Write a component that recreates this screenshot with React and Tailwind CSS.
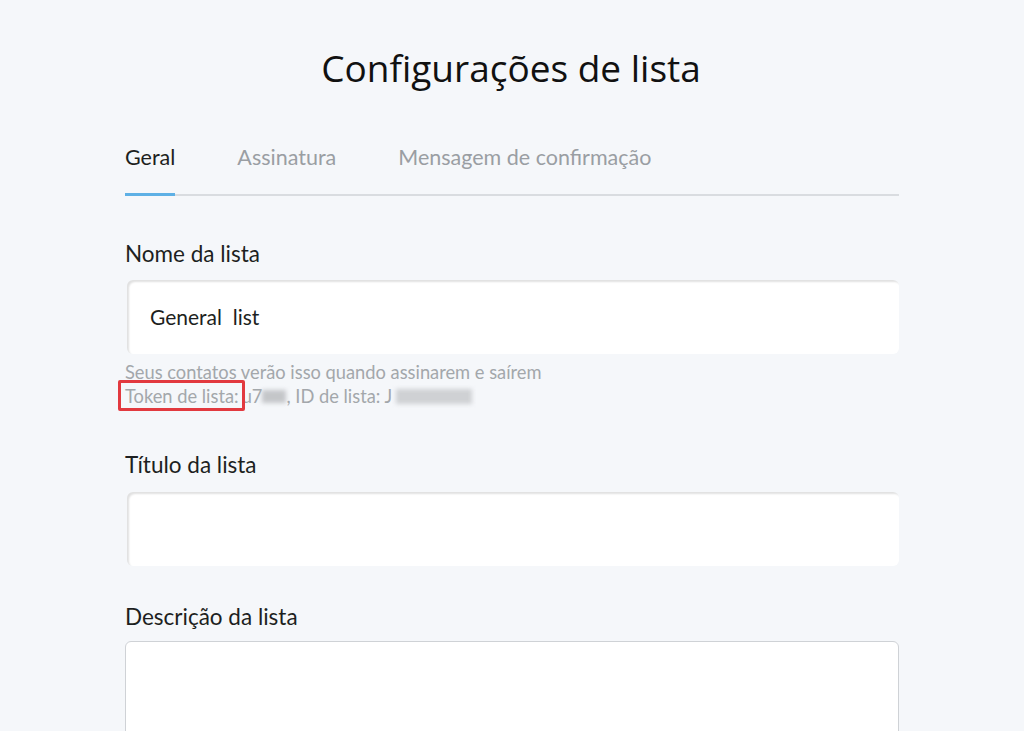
import React from 'react';

const Field = ({ label, value, children }) => (
    <div className="flex flex-col">
        <label className="text-[22.5px] text-[#1d1f21] leading-none">{label}</label>
        <div className="mt-[15px] ml-[2px] h-[74px] bg-white rounded-[6px] shadow-[inset_2px_2px_2px_rgba(0,0,0,0.12)] flex items-center px-[23px] text-[21px] text-[#1d1f21] whitespace-pre">
            {value}
        </div>
        {children}
    </div>
);

const App = () => {
    return (
        <div className="min-h-[731px] h-[731px] overflow-hidden bg-[#f5f7fa] font-['Lato',sans-serif]">
            <div className="w-[774px] ml-[125px] pt-[46px]">
                <h1 className="text-center font-['Open_Sans',sans-serif] text-[37px] text-[#111] leading-[44px] -ml-[2px]">
                    Configurações de lista
                </h1>

                {/* Tabs */}
                <div className="mt-[55px] border-b-2 border-[#d9dce0] flex gap-[62px] text-[21.5px]">
                    <div className="pt-[2px] pb-[24px] leading-none text-[#1d1f21] border-b-[3px] border-[#5eb0e5] -mb-[2px]">Geral</div>
                    <div className="pt-[2px] pb-[24px] leading-none text-[#9a9ea3]">Assinatura</div>
                    <div className="pt-[2px] pb-[24px] leading-none text-[#9a9ea3]">Mensagem de confirmação</div>
                </div>

                <div className="mt-[47px] flex flex-col">
                    <Field label="Nome da lista" value="General  list">
                        <div className="mt-[6px] text-[18.3px] text-[#a3a7ab] leading-[24px]">
                            <div>Seus contatos verão isso quando assinarem e saírem</div>
                            <div className="flex items-center">
                                <span className="relative">
                                    Token de lista:
                                    <span className="absolute -left-[7px] -top-[4px] -right-[6px] -bottom-[3px] border-[3px] border-[#e2393f] rounded-[2px]"></span>
                                </span>
                                <span className="ml-[3px]">u7</span>
                                <span className="inline-block w-[24px] h-[13px] bg-[#c4c6c9] blur-[2px]"></span>
                                <span>, ID de lista: J</span>
                                <span className="inline-block ml-[4px] w-[76px] h-[15px] bg-[#cfd1d4] blur-[2px]"></span>
                            </div>
                        </div>
                    </Field>

                    <div className="mt-[46px]">
                        <Field label="Título da lista" value="" />
                    </div>

                    <div className="mt-[40px] flex flex-col">
                        <label className="text-[22.5px] text-[#1d1f21] leading-none">Descrição da lista</label>
                        <div className="mt-[13px] h-[120px] bg-white rounded-[6px] border border-[#cfd2d6]"></div>
                    </div>
                </div>
            </div>
        </div>
    );
};

export default App;
